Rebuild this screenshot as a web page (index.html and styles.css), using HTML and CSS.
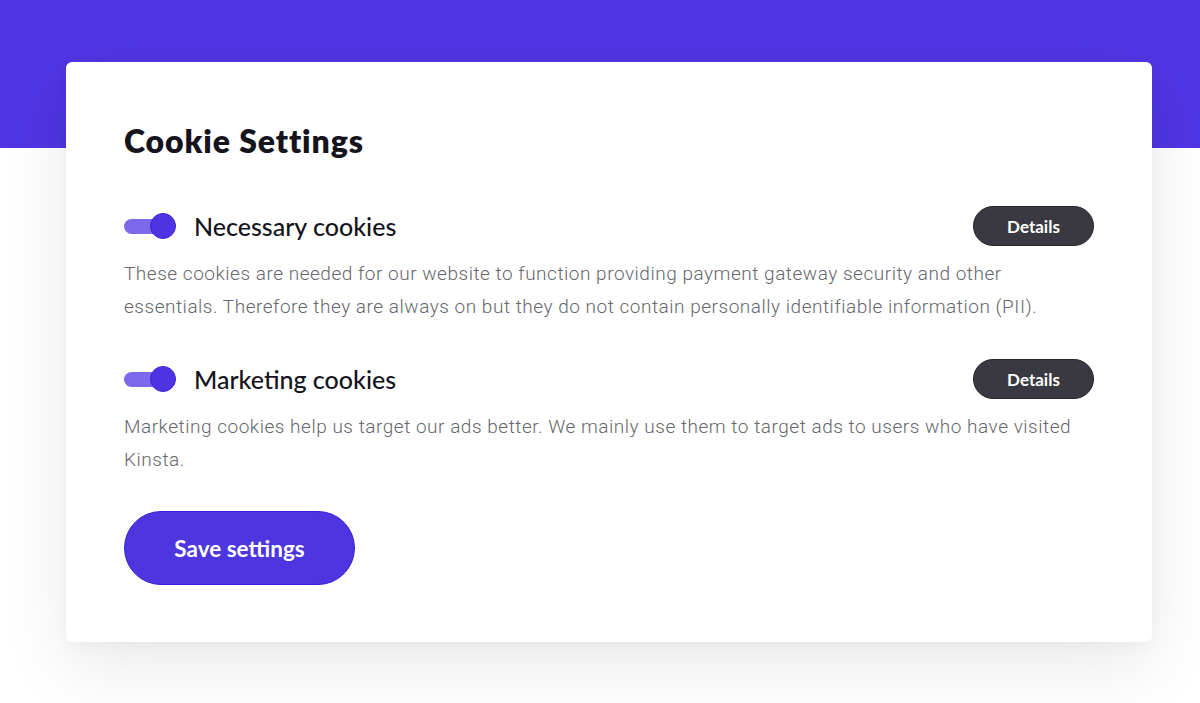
FILE: index.html
```html
<!DOCTYPE html>
<html lang="en">
<head>
<meta charset="utf-8">
<title>Cookie Settings</title>
<link rel="stylesheet" href="styles.css">
</head>
<body>
<div class="page">
  <section class="card">
    <h1 class="title">Cookie Settings</h1>

    <div class="cookie">
      <div class="cookie-head">
        <span class="toggle"><span class="track"></span><span class="thumb"></span></span>
        <h2 class="cookie-name">Necessary cookies</h2>
        <button class="details">Details</button>
      </div>
      <p class="cookie-desc">These cookies are needed for our website to function providing payment gateway security and other essentials. Therefore they are always on but they do not contain personally identifiable information (PII).</p>
    </div>

    <div class="cookie">
      <div class="cookie-head">
        <span class="toggle"><span class="track"></span><span class="thumb"></span></span>
        <h2 class="cookie-name">Marketing cookies</h2>
        <button class="details">Details</button>
      </div>
      <p class="cookie-desc">Marketing cookies help us target our ads better. We mainly use them to target ads to users who have visited Kinsta.</p>
    </div>

    <button class="save">Save settings</button>
  </section>
</div>
</body>
</html>
```
FILE: styles.css
```css
* { box-sizing: border-box; }
html, body { margin: 0; padding: 0; }
body {
  background: #ffffff;
  font-family: "Lato", "Liberation Sans", sans-serif;
  color: #1b1a22;
}
.page {
  height: 703px;
  padding-top: 62px;
  background: linear-gradient(#5035e3 0, #5035e3 148px, #ffffff 148px);
}
.card {
  margin-left: 66px;
  width: 1086px;
  background: #ffffff;
  border-radius: 6px;
  padding: 58px 58px 57px 58px;
  box-shadow: 0 24px 70px rgba(0, 0, 0, 0.09), 0 4px 14px rgba(0, 0, 0, 0.03);
}
.title {
  margin: 0;
  font-size: 32px;
  line-height: 42px;
  font-weight: 800;
  color: #15141c;
  letter-spacing: 0.9px;
}
.cookie { margin-top: 44px; }
.cookie + .cookie { margin-top: 36px; }
.cookie-head {
  display: flex;
  align-items: center;
  height: 40px;
}
.toggle {
  position: relative;
  width: 52px;
  height: 26px;
  flex: none;
  display: flex;
  align-items: center;
}
.track {
  width: 40px;
  height: 15px;
  border-radius: 8px;
  background: #7b69eb;
}
.thumb {
  position: absolute;
  right: 0;
  top: 0;
  width: 26px;
  height: 26px;
  border-radius: 50%;
  background: #4d33e2;
  border: 1px solid #3a22d6;
}
.cookie-name {
  margin: 0 0 0 18px;
  font-size: 25px;
  font-weight: 500;
  color: #15141c;
  flex: 1;
  line-height: 30px;
}
.details {
  width: 121px;
  height: 40px;
  border-radius: 20px;
  background: #3a3941;
  border: 1px solid #26252c;
  color: #ffffff;
  font-family: "Lato", "Liberation Sans", sans-serif;
  font-weight: 700;
  font-size: 17px;
  padding: 0;
}
.cookie-desc {
  margin: 11px 0 0 0;
  font-family: "Roboto", "Liberation Sans", sans-serif;
  font-weight: 300;
  font-size: 19px;
  letter-spacing: 0.52px;
  line-height: 33px;
  color: #66666c;
}
.save {
  display: block;
  margin-top: 35px;
  width: 231px;
  height: 74px;
  border-radius: 37px;
  background: #4d35e0;
  border: 1px solid #3320d8;
  color: #ffffff;
  font-family: "Lato", "Liberation Sans", sans-serif;
  font-weight: 700;
  font-size: 22.5px;
  padding: 0;
}
```
